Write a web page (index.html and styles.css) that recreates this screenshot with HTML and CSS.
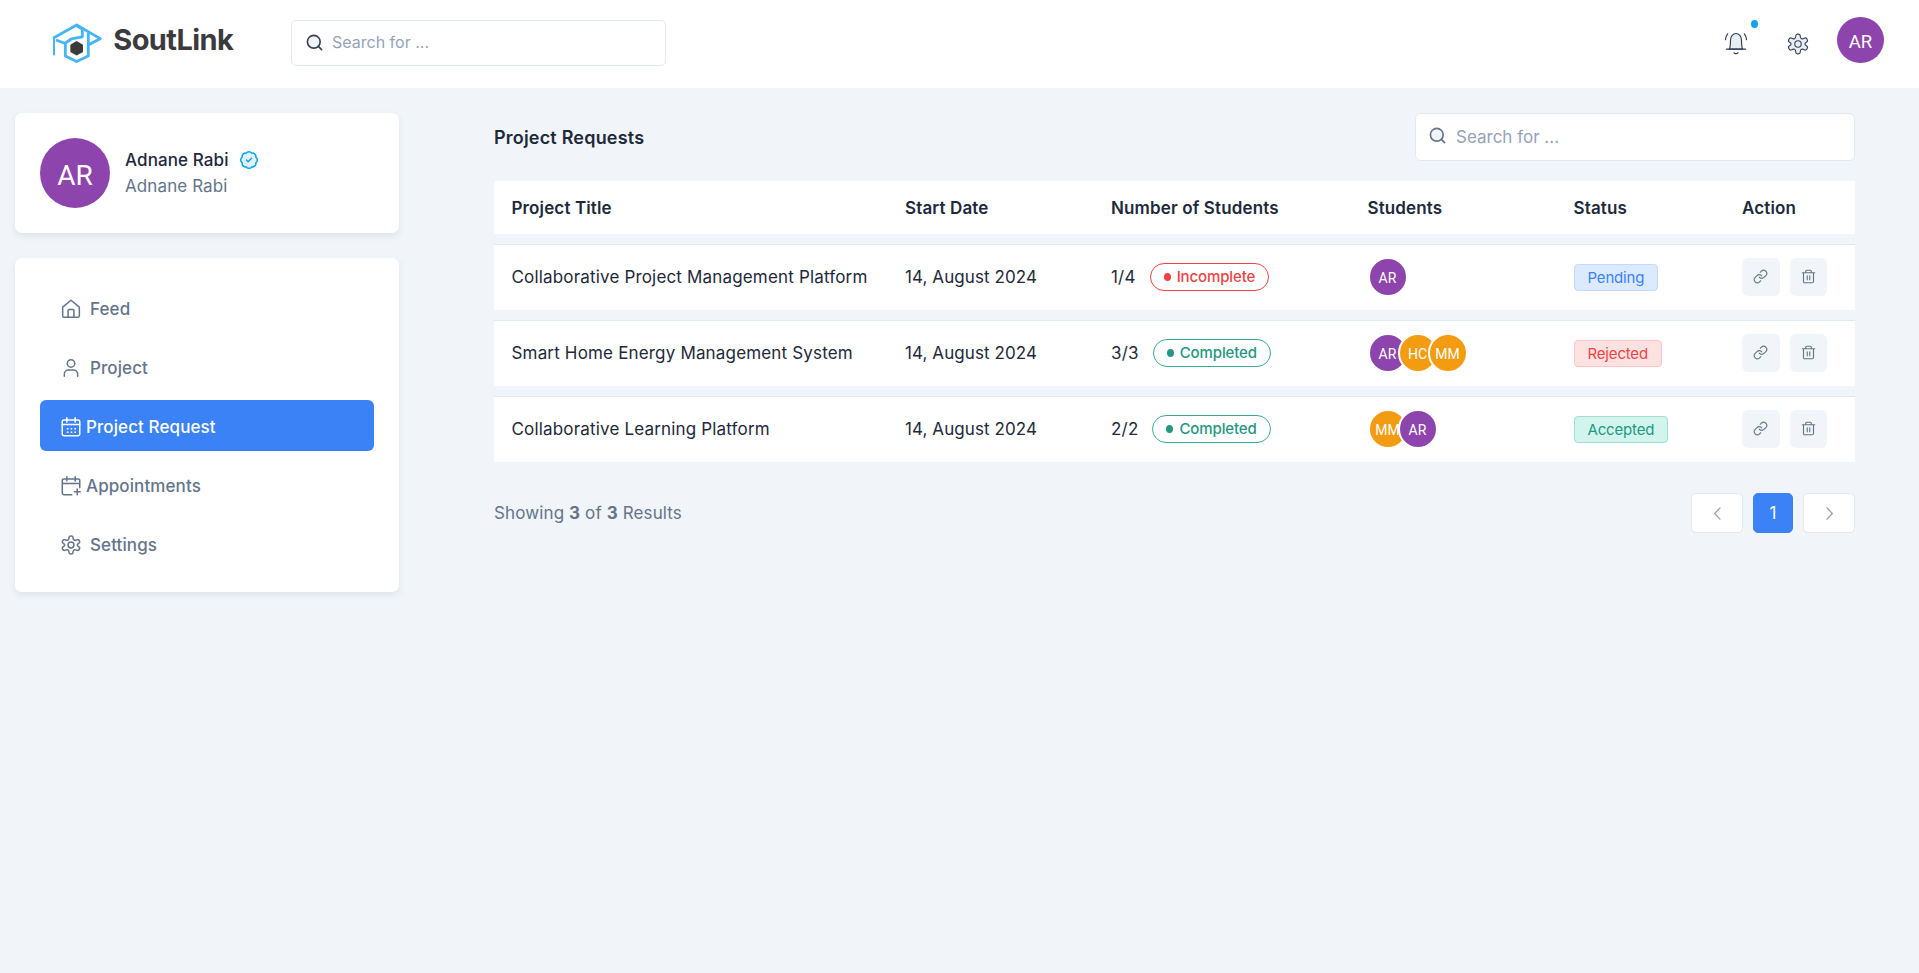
FILE: index.html
```html
<!DOCTYPE html>
<html lang="en">
<head>
<meta charset="utf-8">
<title>SoutLink - Project Requests</title>
<link rel="stylesheet" href="styles.css">
</head>
<body>
<svg class="sprite" aria-hidden="true">
  <symbol id="search" viewBox="0 0 24 24"><circle cx="11" cy="11" r="9"/><path d="M22 22l-4.500-4.500"/></symbol>
  <symbol id="gear" viewBox="0 0 24 24"><path d="M12.220 1.200h-.440a2.200 2.200 0 0 0-2.200 2.200c0 1.700-.5 2.300-1.300 2.800-.8.400-1.600.4-3-.4a2.200 2.200 0 0 0-3 .8l-.3.500a2.200 2.200 0 0 0 .8 3c1.400.8 1.700 1.300 1.700 1.900s-.3 1.100-1.700 1.900a2.200 2.200 0 0 0-.8 3l.3.500a2.200 2.200 0 0 0 3 .8c1.400-.8 2.200-.8 3-.4.8.5 1.300 1.100 1.300 2.800a2.200 2.200 0 0 0 2.200 2.200h.440a2.200 2.200 0 0 0 2.200-2.200c0-1.700.5-2.300 1.300-2.800.8-.4 1.600-.4 3 .4a2.200 2.200 0 0 0 3-.8l.3-.5a2.200 2.200 0 0 0-.8-3c-1.400-.8-1.700-1.300-1.700-1.900s.3-1.100 1.700-1.900a2.200 2.200 0 0 0 .8-3l-.3-.5a2.200 2.200 0 0 0-3-.8c-1.400.8-2.200.8-3 .4-.8-.5-1.300-1.100-1.300-2.800a2.200 2.200 0 0 0-2.200-2.200z"/><circle cx="12" cy="12" r="3.500"/></symbol>
  <symbol id="link" viewBox="0 0 24 24"><path d="M10 13a5 5 0 0 0 7.540.540l3-3a5 5 0 0 0-7.070-7.070l-1.720 1.710"/><path d="M14 11a5 5 0 0 0-7.540-.540l-3 3a5 5 0 0 0 7.070 7.070l1.710-1.710"/></symbol>
  <symbol id="trash" viewBox="0 0 24 24"><path d="M2 6h20M20 6v14a2 2 0 0 1-2 2H6a2 2 0 0 1-2-2V6M7.500 6V4a2 2 0 0 1 2-2h5a2 2 0 0 1 2 2v2M10 11v6M14 11v6"/></symbol>
</svg>

<header class="topbar">
  <a class="brand">
    <svg class="brand-mark" viewBox="150 65 160 125" fill="none" stroke="#45b5f6" stroke-width="8.500" stroke-linejoin="round">
      <path d="M194 129L168 119M159 114L230 74L301 115L266 133"/>
      <path d="M162 112V165" stroke-width="6"/>
      <path d="M230 76L247 86V110L214 116L196 128V167L230 184L265 167V98"/>
      <path d="M230 122L249 133V155L230 166L211 155V133Z" fill="#3b3b3d" stroke="none"/>
    </svg>
    <span class="brand-name">SoutLink</span>
  </a>
  <div class="search search-top"><svg class="icon"><use href="#search"/></svg><span>Search for ...</span></div>
  <div class="tools">
    <span class="bell">
      <svg class="icon" viewBox="0 0 24 24"><path d="M5.2 18.2c1.3-2.2 1.3-4.7 1.3-9C6.500 5.500 9 2.500 12 2.500s5.500 3 5.500 6.700c0 4.300 0 6.800 1.300 9z"/><path d="M2.500 18.200h19"/><path class="hollow" d="M10 21.800c1 1.200 3 1.200 4 0M3.600 2.800C2.400 4.200 1.700 6 1.500 8.600M20.400 2.800c1.200 1.400 1.900 3.200 2.100 5.800"/></svg>
      <i class="bell-dot"></i>
    </span>
    <svg class="icon tool-gear"><use href="#gear"/></svg>
    <span class="avatar avatar-top">AR</span>
  </div>
</header>

<div class="layout">
  <aside class="sidebar">
    <section class="card profile">
      <span class="avatar avatar-big">AR</span>
      <div>
        <div class="name">Adnane Rabi
          <svg class="icon verified" viewBox="0 0 24 24"><path d="M3.850 8.620a4 4 0 0 1 4.780-4.770 4 4 0 0 1 6.740 0 4 4 0 0 1 4.780 4.780 4 4 0 0 1 0 6.740 4 4 0 0 1-4.770 4.780 4 4 0 0 1-6.750 0 4 4 0 0 1-4.780-4.770 4 4 0 0 1 0-6.760z"/><path d="m9 12 2 2 4-4"/></svg>
        </div>
        <div class="handle">Adnane Rabi</div>
      </div>
    </section>
    <nav class="card menu">
      <a class="item spaced"><svg class="icon" viewBox="0 0 24 24"><path d="M2 9.800L12 1.500l10 8.300V20a2 2 0 0 1-2 2H4a2 2 0 0 1-2-2z"/><path d="M8.500 22v-8.500a1 1 0 0 1 1-1h5a1 1 0 0 1 1 1V22"/></svg>Feed</a>
      <a class="item spaced"><svg class="icon" viewBox="0 0 24 24"><path d="M20 22v-2.500a5 5 0 0 0-5-5H9a5 5 0 0 0-5 5V22"/><circle cx="12" cy="6.500" r="4.500"/></svg>Project</a>
      <a class="item active"><svg class="icon" viewBox="0 0 24 24"><rect x="1.500" y="3.500" width="21" height="19" rx="2"/><path d="M1.500 9h21M7 1v5M17 1v5"/><path stroke-dasharray="2 2.500" stroke-linecap="butt" d="M7 14.200h11M7 18.400h11"/></svg>Project Request</a>
      <a class="item"><svg class="icon" viewBox="0 0 24 24"><path d="M22.500 14V5.500a2 2 0 0 0-2-2h-17a2 2 0 0 0-2 2v15a2 2 0 0 0 2 2H13M1.500 9h21M7 1v5M17 1v5M16 19h7M19.500 15.500v7"/></svg>Appointments</a>
      <a class="item spaced"><svg class="icon"><use href="#gear"/></svg>Settings</a>
    </nav>
  </aside>

  <main class="content">
    <div class="heading">
      <h1>Project Requests</h1>
      <div class="search search-main"><svg class="icon"><use href="#search"/></svg><span>Search for ...</span></div>
    </div>

    <div class="table">
      <div class="row head"><span>Project Title</span><span>Start Date</span><span>Number of Students</span><span>Students</span><span>Status</span><span>Action</span></div>
      <div class="row">
        <span class="title">Collaborative Project Management Platform</span><span class="date">14, August 2024</span>
        <span class="count"><b>1/4</b><em class="pill red">Incomplete</em></span>
        <span class="people"><i class="avatar">AR</i></span>
        <span><em class="tag pending">Pending</em></span>
        <span class="actions"><a><svg class="icon"><use href="#link"/></svg></a><a><svg class="icon"><use href="#trash"/></svg></a></span>
      </div>
      <div class="row">
        <span class="title">Smart Home Energy Management System</span><span class="date">14, August 2024</span>
        <span class="count"><b>3/3</b><em class="pill green">Completed</em></span>
        <span class="people"><i class="avatar">AR</i><i class="avatar orange">HC</i><i class="avatar orange">MM</i></span>
        <span><em class="tag rejected">Rejected</em></span>
        <span class="actions"><a><svg class="icon"><use href="#link"/></svg></a><a><svg class="icon"><use href="#trash"/></svg></a></span>
      </div>
      <div class="row">
        <span class="title">Collaborative Learning Platform</span><span class="date">14, August 2024</span>
        <span class="count"><b>2/2</b><em class="pill green">Completed</em></span>
        <span class="people"><i class="avatar orange">MM</i><i class="avatar">AR</i></span>
        <span><em class="tag accepted">Accepted</em></span>
        <span class="actions"><a><svg class="icon"><use href="#link"/></svg></a><a><svg class="icon"><use href="#trash"/></svg></a></span>
      </div>
    </div>

    <footer class="footer">
      <p class="summary">Showing <b>3</b> of <b>3</b> Results</p>
      <div class="pager">
        <a><svg class="icon" viewBox="0 0 24 24"><path d="M15.500 4L8 12l7.500 8"/></svg></a>
        <a class="current">1</a>
        <a><svg class="icon" viewBox="0 0 24 24"><path d="M8.500 4L16 12l-7.500 8"/></svg></a>
      </div>
    </footer>
  </main>
</div>
</body>
</html>
```

FILE: styles.css
```css
* { box-sizing: border-box; }
body {
  margin: 0;
  min-height: 973px;
  background: #f1f5f9;
  color: #1e293b;
  font: 17px/26px Inter, "Liberation Sans", sans-serif;
}
.sprite { position: absolute; width: 0; height: 0; }
b, em, i { font-style: normal; font-weight: inherit; }
.icon {
  display: block;
  flex: none;
  width: 20px;
  height: 20px;
  overflow: visible;
  fill: none;
  stroke: currentColor;
  stroke-width: 1.8;
  stroke-linecap: round;
  stroke-linejoin: round;
}

.topbar {
  display: flex;
  align-items: flex-start;
  height: 88px;
  background: #fff;
}
.brand { display: flex; width: 291px; padding: 21.5px 0 0 50px; }
.brand-mark { flex: none; width: 53.300px; height: 41.600px; }
.brand-name {
  margin: -2px 0 0 10px;
  color: #3b3b3d;
  font-size: 29px;
  font-weight: 700;
  line-height: 40px;
  letter-spacing: -.6px;
}
.search {
  display: flex;
  align-items: center;
  background: #fff;
  border: 1px solid #e2e8f0;
  border-radius: 6px;
  color: #94a3b8;
}
.search-top { width: 375px; height: 46px; margin-top: 20px; padding: 0 0 2px 14px; gap: 9px; border-radius: 5px; font-size: 16px; }
.search .icon { width: 17px; height: 17px; fill: #f1f5f9; color: #334155; stroke-width: 2.300; }
.tools { display: flex; margin-left: auto; padding-right: 35px; }
.bell { position: relative; margin-top: 31px; }
.bell .icon, .tool-gear { width: 24px; height: 24px; fill: #e9eef4; color: #334155; stroke-width: 1.200; }
.bell .hollow { fill: none; }
.bell-dot { position: absolute; left: 27px; top: -11px; width: 7px; height: 8px; border-radius: 50%; background: #0ea5e9; }
.tools .tool-gear { width: 22px; height: 22px; margin: 32.500px 28px 0 39px; }
.avatar {
  display: flex;
  flex: none;
  align-items: center;
  justify-content: center;
  border-radius: 50%;
  background: #8e44ad;
  color: #fff;
  font-family: Roboto, sans-serif;
  font-weight: 400;
}
.avatar-top { width: 47px; height: 46px; margin-top: 17px; padding-top: 3px; font-size: 18.500px; }
.avatar-big { width: 70px; height: 70px; padding-top: 6px; font-size: 28px; }

.layout { display: flex; padding: 25px 64px 0 15px; }
.sidebar { width: 384px; }
.card { background: #fff; border-radius: 7px; box-shadow: 0 3px 6px rgba(100, 116, 139, .13); }
.profile { display: flex; gap: 15px; height: 120px; margin-bottom: 25px; padding: 25px; }
.profile .name { display: flex; gap: 10px; align-items: center; margin-top: 9px; font-weight: 500; letter-spacing: .1px; }
.verified { width: 20px; height: 20px; color: #0ea5e9; fill: #e0f2fe; }
.handle { color: #64748b; letter-spacing: .1px; }
.menu { display: flex; flex-direction: column; gap: 8px; height: 334px; padding: 24px 25px 23px; }
.item {
  display: flex;
  flex: none;
  gap: 5px;
  align-items: center;
  height: 51px;
  padding: 3px 0 0 21px;
  border-radius: 6px;
  color: #64748b;
  font-weight: 500;
  letter-spacing: .1px;
}
.item.spaced { gap: 9px; }
.item.active { background: #3b82f6; color: #fff; }

.content { flex: 1; margin-left: 95px; }
.heading { display: flex; justify-content: space-between; align-items: center; height: 48px; margin-bottom: 20px; }
.heading h1 { margin: 2px 0 0; font-size: 18px; font-weight: 600; letter-spacing: .2px; }
.search-main { width: 440px; height: 48px; padding-left: 13px; gap: 10px; }
.search-main .icon { margin-top: -4px; color: #64748b; }

.table { display: flex; flex-direction: column; gap: 10px; }
.row {
  display: grid;
  grid-template-columns: 393.500px 206px 256.500px 206px 168.500px 1fr;
  align-items: center;
  height: 66px;
  padding: 0 0 2px 17.500px;
  background: #fff;
  border-top: 1px solid #e2e8f0;
}
.row.head { height: 53px; padding-bottom: 0; border-top: 0; font-weight: 600; letter-spacing: .13px; }
.title { letter-spacing: .17px; }
.date { letter-spacing: .08px; }
.count { display: flex; align-items: center; gap: 14px; letter-spacing: .2px; }
.pill {
  display: flex;
  align-items: center;
  gap: 6px;
  height: 28px;
  padding: 0 13px;
  border: 1px solid;
  border-radius: 14px;
  font-size: 15px;
  font-weight: 500;
  letter-spacing: -.12px;
}
.pill::before { content: ""; width: 7px; height: 8px; border-radius: 50%; background: currentColor; }
.red { color: #ef4444; }
.green { color: #249782; border-color: #34ab94; }
.people { display: flex; }
.people .avatar { width: 40px; height: 40px; margin-right: -10px; padding-top: 2px; border: 2px solid #fff; font-size: 14px; }
.people .orange { background: #f39c12; }
.tag {
  display: inline-block;
  height: 27px;
  margin-top: 2px;
  padding: 0 13px;
  border: 1px solid;
  border-radius: 4px;
  font-size: 15px;
  line-height: 26px;
  letter-spacing: -.17px;
}
.pending { background: #dbeafe; border-color: #bfdbfe; color: #3b82f6; }
.rejected { background: #fee2e2; border-color: #fbc5c5; color: #ef4444; }
.accepted { background: #d1f5ec; border-color: #9fe0d0; color: #249782; }
.actions { display: flex; gap: 10px; }
.actions a {
  display: flex;
  align-items: center;
  justify-content: center;
  width: 37.500px;
  height: 38px;
  border-radius: 6px;
  background: #f1f5f9;
  color: #64748b;
}
.actions .icon { width: 15px; height: 15px; }

.footer { display: flex; justify-content: space-between; align-items: center; margin-top: 31px; }
.summary { margin: 0; color: #64748b; letter-spacing: .12px; }
.summary b { font-weight: 700; }
.pager { display: flex; gap: 10px; }
.pager a {
  display: flex;
  align-items: center;
  justify-content: center;
  width: 52px;
  height: 40px;
  background: #fff;
  border: 1px solid #e2e8f0;
  border-radius: 5px;
  color: #94a3b8;
}
.pager .icon { width: 17px; height: 17px; }
.pager .current { width: 40px; border-color: #3b82f6; background: #3b82f6; color: #fff; }
```
